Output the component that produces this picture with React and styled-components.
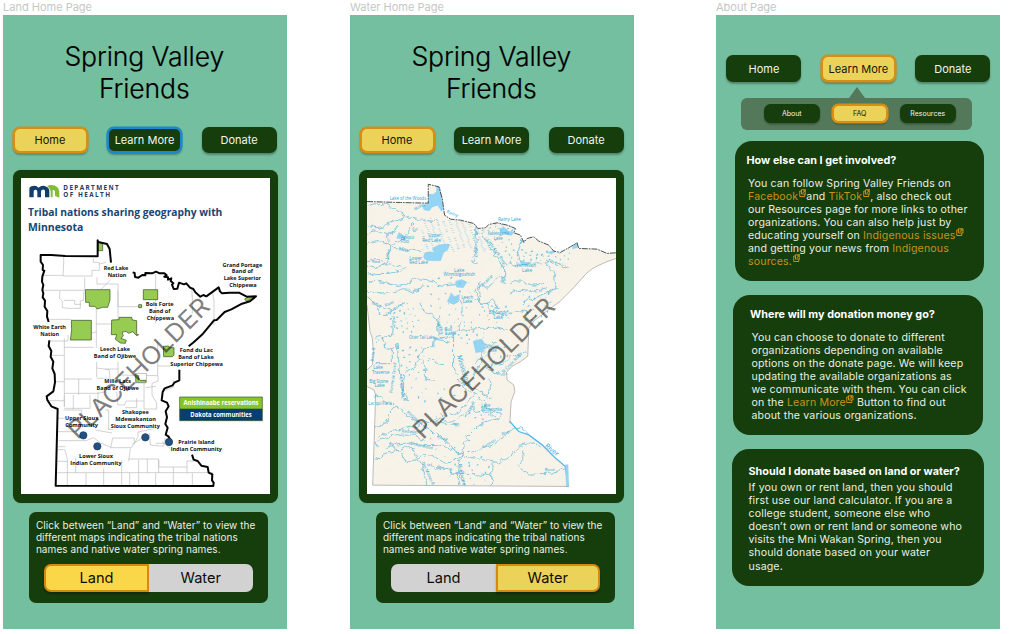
import React from "react";
import styled, { createGlobalStyle } from "styled-components";

const Global = createGlobalStyle`
  * { box-sizing: border-box; }
  body { margin: 0; background: #fff; font-family: Inter, "Liberation Sans", sans-serif; overflow: hidden; }
`;

const Board = styled.main`
  display: flex;
  align-items: flex-start;
  width: 1012px;
  height: 634px;
  padding-left: 3px;
`;
const Artboard = styled.section`
  width: 283.5px;
  margin-right: ${(p) => p.$after || 0}px;
`;
const BoardName = styled.div`
  height: 15px;
  line-height: 14px;
  font-size: 11px;
  color: #c6c6c6;
  white-space: nowrap;
`;
const Phone = styled.div`
  height: 613.5px;
  background: #74bf9f;
  padding-top: ${(p) => p.$top}px;
`;
const Title = styled.h1`
  margin: 0 0 22.5px;
  text-align: center;
  font-size: 26.6px;
  line-height: 32px;
  font-weight: 300;
  letter-spacing: -0.12px;
  -webkit-text-stroke: 0.2px #000;
  color: #000;
  padding-right: 1px;
`;
const Nav = styled.nav`
  display: flex;
  gap: 19.5px;
  padding-left: ${(p) => p.$left || 9.5}px;
`;
const NavButton = styled.button`
  width: 75px;
  height: 26.5px;
  padding: ${(p) => p.$drop || 0}px 0 0;
  border: ${(p) => (p.$tone ? "2px solid" : "0 solid")};
  border-color: ${(p) => (p.$tone === "focus" ? "#1c86ce" : "#d68e14")};
  border-radius: 7px;
  background: ${(p) => (p.$tone === "active" ? "#ebd35a" : "#163d0c")};
  color: ${(p) => (p.$tone === "active" ? "#14140a" : "#f2f5f1")};
  box-shadow: ${(p) => (p.$tone ? `0 0 0 0.6px ${p.$tone === "focus" ? "#1c86ce" : "#d68e14"}, ` : "")}0 1.5px 2px rgba(0, 0, 0, 0.3);
  font: 400 11px Inter, sans-serif;
  white-space: nowrap;
`;
const SubButton = styled(NavButton)`
  width: 56.5px;
  height: 18.5px;
  border-radius: 6.5px;
  font-size: 7px;
`;
const MapCard = styled.div`
  width: 265px;
  height: 333px;
  margin: 16.5px 0 0 ${(p) => p.$left}px;
  padding: 8px;
  border-radius: 8px;
  background: #163d0c;
  box-shadow: 0 0 1px rgba(22, 61, 12, 0.5);
  svg { display: block; width: 249px; height: 316px; margin-top: 0.5px; background: #fff; }
`;
const InfoCard = styled.div`
  width: 238.5px;
  height: 91px;
  margin: 9px 0 0 26.4px;
  padding: 7px 0 0 6.5px;
  border-radius: 7px;
  background: #163d0c;
`;
const InfoText = styled.p`
  margin: 0;
  font-size: 10px;
  line-height: 12.4px;
  letter-spacing: 0.07px;
  color: #e9efe7;
  white-space: pre;
`;
const Toggle = styled.div`
  display: flex;
  width: 208.5px;
  height: 28px;
  margin: 7.8px 0 0 8.5px;
`;
const ToggleHalf = styled.button`
  width: 50%;
  padding: 1px 0 0;
  border: ${(p) => (p.$on ? "2px solid #d4890f" : "0")};
  border-radius: ${(p) => (p.$side === "left" ? "7px 0 0 7px" : "0 7px 7px 0")};
  background: ${(p) => p.$on || "#d2d2d2"};
  box-shadow: ${(p) => (p.$on ? "0 2px 2px rgba(0,0,0,.3)" : "none")};
  font: 400 14.6px Inter, sans-serif;
  color: #0c0c08;
`;
const Pointer = styled.div`
  width: 0;
  margin: 5px 0 0 132.5px;
  border: 8px solid transparent;
  border-top: 0;
  border-bottom: 11px solid #54795a;
`;
const SubNav = styled.div`
  display: flex;
  align-items: flex-start;
  gap: 11.5px;
  width: 231px;
  height: 32px;
  margin-left: 25px;
  padding: 6.5px 0 0 22.5px;
  border-radius: 6px;
  background: #54795a;
`;
const FaqCard = styled.article`
  width: ${(p) => p.$w}px;
  height: ${(p) => p.$h}px;
  margin: ${(p) => p.$gap}px 0 0 ${(p) => p.$left}px;
  padding: ${(p) => p.$pad};
  border-radius: 17px;
  background: #163d0c;
`;
const Question = styled.h2`
  margin: 0;
  font-size: 10.8px;
  line-height: 13px;
  font-weight: 700;
  letter-spacing: 0.03px;
  color: #fff;
  white-space: nowrap;
`;
const Answer = styled.p`
  margin: ${(p) => p.$gap}px 0 0 ${(p) => p.$in || 0}px;
  font-size: 10.6px;
  line-height: 13.1px;
  letter-spacing: 0.14px;
  color: #e9efe7;
  white-space: pre;
`;
const Link = styled.span`
  color: #c6921b;
`;
const LinkIcon = styled.svg`
  display: inline-block;
  width: 7.5px;
  height: 8px;
  margin-left: 0.5px;
  vertical-align: 3px;
  margin-top: -5px;
`;
const Out = () => (
  <LinkIcon viewBox="0 0 15 16" fill="none" stroke="#d69a17" strokeWidth="1.8">
    <path d="M5 4H1.5V15H11.5V10.5M5 1.5H14V10H5ZM7.5 8L12 3.5M8.5 3.5H12V7" />
  </LinkIcon>
);

const MapText = styled.text`
  font-family: "Open Sans", "Noto Sans", sans-serif;
  font-weight: ${(p) => p.$weight || 700};
`;

function Watermark() {
  return (
    <g transform="translate(199 824) rotate(-44.6)">
      <text x="-3" y="0" fill="#000" fillOpacity=".5" fontFamily="Inter" fontSize="74" textLength="564" lengthAdjust="spacingAndGlyphs">PLACEHOLDER</text>
    </g>
  );
}

const places = [
  [312, 316, 74, "Red Lake"], [315, 337, 56, "Nation"],
  [691, 305, 119, "Grand Portage"], [691, 325, 64, "Band of"], [691, 346, 112, "Lake Superior"], [693, 366, 82, "Chippewa"],
  [443, 423, 84, "Bois Forte"], [443, 443, 64, "Band of"], [445, 464, 82, "Chippewa"],
  [113, 493, 98, "White Earth"], [113, 514, 56, "Nation"],
  [309, 558, 90, "Leech Lake"], [309, 579, 127, "Band of Ojibwe"],
  [553, 562, 99, "Fond du Lac"], [552, 582, 107, "Band of Lake"], [554, 603, 158, "Superior Chippewa"],
  [317, 653, 80, "Mille Lacs"], [317, 674, 127, "Band of Ojibwe"],
  [209, 765, 100, "Upper Sioux"], [209, 786, 98, "Community"],
  [370, 748, 80, "Shakopee"], [371, 769, 122, "Mdewakanton"], [370, 790, 147, "Sioux Community"],
  [252, 878, 102, "Lower Sioux"], [252, 899, 154, "Indian Community"],
  [553, 838, 108, "Prairie Island"], [553, 858, 154, "Indian Community"],
];

const counties =
  "M155 276V297L153 333H240M93 331H153M240 333V316H262V292H244V280M262 297L282 292M218 337V375M92 376H218M255 337V357H318V508M295 345L266 374M318 425H380M431 327V374M318 377V425M540 372V395M602 383L606 410V480M541 390V445M431 404V475M144 378L142 400L151 408V428L170 430H205V408L215 405V380M155 406H188V418H207M108 463H178M253 432V548M253 477H300M236 505L254 500M157 520V725M119 571H157M110 528H168V510M157 547H245M254 590V636M254 609L291 614L295 640H254M318 590V630L368 631M320 612H280M200 642V690M157 642H240M127 650H157M157 685H260L280 680M157 690V725M104 707H157M234 690V730H157M258 680V735M280 735H290V795M155 735H209V756M314 680L318 720H337L343 708H395M396 655V732H434V714L420 690V655L438 648V632L401 631M437 530V630M437 603H475M484 645V667L450 680M401 668L432 664M374 700V728H340M138 800H190M140 827H222L245 818L267 835L299 848H358L367 836V819H302L299 834L296 850M367 835L378 815V801L430 790M412 804L415 840L455 844L459 820M430 835H475M355 850L350 889M136 854H158L166 880V962M133 889H166M136 923H604M191 878V924M222 924V963M275 910V963M329 885V963M350 882H440V924M380 885V964M406 882V924M440 885V906H525V888H560M484 906V965M525 906V925M541 925V964M353 924V964M431 924V964M138 845L160 845M450 830L475 851M250 795L300 804M184 690V733M136 760H175M290 793H303M402 803L390 820L360 838";

function LandMap() {
  return (
    <svg viewBox="27 39 747 948">
      <path d="M52 97V72Q52 64 63 63Q74 61 79 68Q91 59 103 65Q112 68 112 79V97H99V79Q99 72 91 74Q87 75 87 80V97H76V80Q76 73 69 74Q65 75 65 80V97Z" fill="#123e69" />
      <path d="M116 97V78Q113 68 105 63Q119 57 132 64Q141 69 142 82V98L129 93V80Q127 72 122 76V97Z" fill="#83bd35" />
      <MapText x="154" y="74" fontSize="19" textLength="166" fill="#143e69">DEPARTMENT</MapText>
      <MapText x="154" y="96" fontSize="19" textLength="140" fill="#143e69">OF HEALTH</MapText>
      <MapText x="48" y="152" fontSize="32" textLength="583" lengthAdjust="spacingAndGlyphs" fill="#174575">Tribal nations sharing geography with</MapText>
      <MapText x="48" y="197" fontSize="32" textLength="166" lengthAdjust="spacingAndGlyphs" fill="#174575">Minnesota</MapText>
      <path d={counties} fill="none" stroke="#bbb" strokeWidth="2" />
      <g fill="#96cc51" stroke="#35451f" strokeWidth="2">
        <path d="M220 374H294V405L287 427H272L255 432L249 424H232V412H221Z" />
        <path d="M394 374H437V404H394ZM380 419H389V428H380ZM178 466H238V525H175L179 495Z" />
        <path d="M299 465L321 464V457H359L361 465L374 467V509H380L374 512L362 500L350 505L342 499L330 502L334 512L327 520L343 526L340 535L325 534L310 523L314 509H298Z" />
        <path d="M454 544L470 543L473 548H486V571L481 575H455ZM370 628L380 632V642L386 646H402V653H371ZM698 402L710 395L730 396L703 409ZM259 232L272 235V257H259Z" />
        <rect x="370" y="625" width="33" height="28" fill="none" stroke="#aaa" />
      </g>
      <path d="M297 293L293 252L285 237L259 231L257 226V274L160 273L118 270H86V290L93 300L92 315L97 317L91 335L90 350L94 360L91 375L94 385L92 397L99 407L98 425L106 438L105 455L110 471M112 526L110 543L118 558L116 575L124 590L121 610L128 627L129 652L124 679L104 694L106 705L118 724L137 732L131 962L604 963L605 953L600 946L601 928L590 923L587 906L568 902L557 888L545 884L540 869M362 322L368 324L369 336L379 338L391 330L400 331L400 324L420 325L432 320L443 325H457L464 331L457 335L468 337L468 344L478 340L476 348L484 355L480 359L485 372L496 371L501 353L516 358L523 355L534 368L544 372L550 382L565 395L574 390L583 394L620 367L624 379L630 385L654 383H681L704 395L732 394L714 409L690 416L658 433L638 441L614 465L606 466L573 506L559 519L545 532L530 544M502 614V646L487 653L482 661L458 670L452 681L449 706L465 713L470 724L461 739L465 757L460 777L467 788L461 809L470 815L478 829" fill="none" stroke="#050505" strokeWidth="6" strokeLinejoin="round" />
      <g fill="#215083" stroke="#163751" strokeWidth="2">
        <circle cx="214" cy="811" r="11" /><circle cx="256" cy="844" r="11" /><circle cx="400" cy="817" r="11" /><circle cx="471" cy="831" r="11" />
      </g>
      <path d="M503 696H751V732H503Z" fill="#88c52b" />
      <path d="M503 732H751V767H503Z" fill="#073f70" />
      <path d="M503 696H751V767H503ZM503 732H751" fill="none" stroke="#36532e" strokeWidth="2" />
      <MapText x="627" y="720" fontSize="20" textAnchor="middle" textLength="225" lengthAdjust="spacingAndGlyphs" fill="#fff">Anishinaabe reservations</MapText>
      <MapText x="627" y="756" fontSize="20" textAnchor="middle" textLength="184" lengthAdjust="spacingAndGlyphs" fill="#fff">Dakota communities</MapText>
      {places.map(([x, y, w, t]) => (
        <MapText key={t + y + x} x={x} y={y} fontSize="17.5" textAnchor="middle" textLength={w} lengthAdjust="spacingAndGlyphs" fill="#111" stroke="#fff" strokeWidth="3" paintOrder="stroke">{t}</MapText>
      ))}
      <Watermark />
    </svg>
  );
}

const waterShape =
  "M29 109L130 112L213 114V57L245 65L255 100L262 150L280 162L310 165L350 175L362 190L385 188L395 178L420 173L450 180L475 190L470 203L490 210L500 232L510 220L530 215L545 228L575 240L590 258L610 262L640 245L660 233L665 250L720 252L750 265L777 263V280Q712 301 687 326L646 372L610 408L568 439L530 468L515 490L512 574L490 590L465 604L448 622L450 645L470 660L473 680L462 710L458 775L485 800L515 810L555 840L590 875L625 905L635 965L46 961L55 690L50 675L29 665V615L45 600L48 560L45 520L38 500L29 420Z";

const rivers =
  "M30 122Q70 108 97 123T138 149T205 166T242 170M31 180Q57 195 88 180T155 150M30 209Q48 193 77 205T122 180M30 240Q55 217 91 233T150 202T174 199M30 288Q51 278 72 291T96 270T93 216T119 202M97 239Q120 259 153 254T198 267M31 302Q50 315 71 301T127 309M30 330Q58 323 86 325T148 305M31 352Q62 344 92 356T155 350T228 351T304 354M29 378Q73 394 109 381T160 381T198 359M31 398Q63 431 92 437T132 408M59 431Q78 461 100 441T144 410M101 440Q114 458 109 487T89 512L58 530M185 412Q187 432 205 440T233 459T242 500T289 510Q306 488 312 469M304 402Q322 430 311 450M359 188L356 240Q361 262 348 277T361 292M375 194Q377 223 400 250T436 296T437 355M434 314L455 292Q486 309 482 298M490 240V222M505 230Q482 235 481 260T505 292M510 295L552 293L597 286M568 294Q594 322 595 350T569 385M445 340Q419 325 407 350T379 362T365 389T397 410T410 440Q432 459 459 446T513 440M373 355L352 376L364 405L389 417L402 432M460 356Q483 340 508 354T565 350M456 390Q482 371 502 377T569 370M497 420Q520 399 545 393T598 365M570 285L606 304M589 288L633 310M309 494Q358 500 389 488T451 496M289 506V620Q315 650 324 665T355 690T382 716T428 768M55 690Q83 706 110 724T156 754T217 793T274 838T312 872M49 521Q75 500 77 526L84 550L105 548V596H48M105 548L120 538L124 590L129 650L135 700M148 708Q132 669 143 628L175 600L202 548L229 545L231 520Q262 522 281 529M184 585Q209 592 202 619T230 645M211 577Q239 600 260 599M327 654Q344 665 361 671L401 701M356 690Q332 700 322 722T281 750M349 718Q342 738 360 745L397 737L429 745V765M387 604L440 594L459 574L508 563M389 604Q403 628 449 624M390 638Q412 650 392 684V706M377 571L362 611L344 638M419 532L381 553L355 594M55 790Q85 776 92 753T125 728M62 817Q89 799 113 797T199 776M197 789L219 768L303 780M199 823Q155 798 101 813T60 850M83 850Q124 830 159 837T228 842T315 870M99 834Q108 866 139 849T180 885Q214 852 239 880T315 872M133 862Q138 895 163 891T186 887Q206 929 211 961M197 890Q249 919 309 924T401 929M243 907L300 925L309 965M315 871L322 833Q334 811 360 789T428 765M339 866Q366 848 389 846T451 805T515 813M316 873Q368 882 403 891T478 855T550 850M497 854V884L480 905L513 928L581 925L628 911M405 888L403 963M314 870L302 907L325 963M69 786L89 768M55 884L80 867L134 853M241 745L263 760L240 764L233 758M262 768H293L317 752";

const waterNames = [
  [152, 103, 110, "Lake of the Woods"], [457, 169, 69, "Rainy Lake"], [423, 211, 63, "Kabetogama"], [423, 225, 27, "Lake"],
  [232, 217, 38, "Upper"], [223, 232, 56, "Red Lake"], [151, 222, 40, "Agassiz"], [143, 234, 25, "Pool"],
  [175, 284, 38, "Lower"], [184, 298, 56, "Red Lake"], [507, 306, 60, "Vermilion"], [510, 321, 30, "Lake"],
  [306, 320, 31, "Lake"], [306, 333, 95, "Winnibigoshish"], [330, 401, 35, "Leech"], [331, 415, 29, "Lake"],
  [422, 447, 54, "Big Sandy"], [423, 462, 28, "Lake"], [273, 497, 24, "Gull"], [280, 509, 33, "Lake"], [194, 521, 77, "Otter Tail Lake"],
  [62, 612, 29, "Lake"], [70, 626, 52, "Traverse"], [64, 653, 57, "Big Stone"], [67, 667, 31, "Lake"], [68, 721, 70, "Lac qui Parle"],
  [386, 725, 27, "Lake"], [403, 738, 62, "Minnetonka"], [406, 548, 40, "Mille Lacs"], [406, 562, 25, "Lake"],
];
const riverNames = [
  [173, 136, -28, 35, "Muskeg"], [267, 143, 21, 36, "Rainy"], [388, 226, 54, 92, "Little Fork River"], [44, 294, 0, 24, "Red"], [123, 255, 13, 31, "River"],
  [43, 416, 28, 28, "Buffalo"], [85, 426, -25, 30, "River"], [378, 364, -45, 42, "Prairie"], [237, 462, 73, 48, "Crow Wing"],
  [299, 573, 73, 95, "Mississippi"], [438, 626, -45, 83, "St Croix River"], [148, 743, 42, 51, "Minnesota"], [238, 818, 23, 33, "River"],
  [133, 803, 3, 56, "Redwood"], [160, 839, 13, 67, "Cottonwood"], [378, 851, -30, 45, "Cannon"], [435, 813, -22, 30, "River"], [331, 751, -59, 44, "Crow R"],
  [193, 894, 65, 74, "Des Moines R"], [304, 898, 80, 66, "Blue Earth R"], [562, 845, 39, 47, "River"], [563, 918, 0, 30, "Root"],
  [105, 684, -82, 92, "Pomme de Terre R"], [127, 637, 82, 72, "Chippewa R"], [93, 283, -80, 31, "Lake"], [350, 248, 82, 30, "Bigfork"], [48, 590, -82, 42, "Bois R"],
];

const clusters = [
  [140, 460, 48, 48, 26], [285, 390, 85, 75, 26], [505, 280, 60, 27, 24], [430, 190, 40, 17, 14],
  [430, 245, 50, 25, 12], [300, 488, 53, 30, 18], [535, 420, 48, 60, 24], [170, 590, 45, 57, 20],
  [415, 445, 55, 28, 15], [280, 870, 95, 70, 13], [210, 687, 85, 26, 10], [360, 745, 45, 20, 10],
  [600, 268, 50, 24, 15], [350, 520, 40, 25, 11], [360, 925, 50, 37, 10], [420, 560, 42, 42, 12],
];
const lakelets = clusters.flatMap(([cx, cy, rx, ry, n], c) =>
  Array.from({ length: n }, (_, i) => {
    const a = i * 2.4 + c;
    const r = Math.sqrt((i + 0.5) / n);
    return [cx + Math.cos(a) * r * rx, cy + Math.sin(a) * r * ry, 1.3 + ((i * 7) % 5) * 0.35, (i * 41) % 180];
  })
);
const marsh = Array.from({ length: 190 }, (_, i) => [190 + ((i * 53) % 205), 145 + ((i * 37 + (i % 5) * 9) % 115)])
  .filter(([x, y]) => y > 158 + Math.max(0, x - 260) * 0.23);

function WaterMap() {
  return (
    <svg viewBox="29 39 748 948">
      <defs>
        <filter id="relief" x="0" y="0" width="100%" height="100%">
          <feTurbulence type="fractalNoise" baseFrequency=".025" numOctaves="4" seed="7" />
          <feDiffuseLighting surfaceScale="2.2" lightingColor="#fff"><feDistantLight azimuth="225" elevation="65" /></feDiffuseLighting>
          <feComposite in2="SourceGraphic" operator="in" />
        </filter>
        <filter id="meander" x="0" y="0" width="100%" height="100%" colorInterpolationFilters="sRGB">
          <feTurbulence type="fractalNoise" baseFrequency=".05" numOctaves="2" seed="3" />
          <feDisplacementMap in="SourceGraphic" scale="22" xChannelSelector="R" yChannelSelector="G" />
        </filter>
      </defs>
      <path d={waterShape} fill="#f8f3e8" />
      <path d={waterShape} fill="#fff" filter="url(#relief)" opacity=".08" />
      <g stroke="#8acbe0" strokeWidth="1.5">
        {marsh.map(([x, y], i) => <path key={i} d={`M${x} ${y}h6`} />)}
      </g>
      <path d={rivers} fill="none" stroke="#72bfdc" strokeWidth="2.6" filter="url(#meander)" />
      <path d="M458 770L485 800L515 810L555 840L590 875L625 905L633 963" fill="none" stroke="#58b9e7" strokeWidth="4" />
      <g fill="#94d5f6" stroke="#76c3e9" strokeWidth="1">
        <path d="M215 87L228 88L238 80L238 62L248 66L258 132L253 138L241 120L224 126L216 137L200 134L196 122L213 117Z" />
        <path d="M225 252Q241 236 276 237Q278 252 259 262L250 287L210 286Q192 278 204 263Q218 258 232 262Z" />
        <path d="M295 349L312 343L329 351L318 368L298 366ZM275 400L282 383L291 395L307 388L303 411L289 418L270 409ZM348 529L373 522L384 538L379 559L356 563ZM118 219L125 202L139 212L130 221ZM426 190L442 188L454 198L471 202L462 211L435 203ZM625 900H633L635 966H628Z" />
        <path d="M488 290L501 285L502 293L521 291L510 301L494 299ZM650 238L662 234L660 248L646 251ZM568 262L589 258L585 267Z" />
      </g>
      <g fill="#72c6ea">
        {lakelets.map(([x, y, r, a], i) => <ellipse key={i} cx={x} cy={y} rx={r * 1.5} ry={r * 0.8} transform={`rotate(${a} ${x} ${y})`} />)}
      </g>
      <path d="M777 280Q712 301 687 326L646 372L610 408L568 439L530 468L515 490L512 574L490 590L465 604L448 622L450 645L470 660L473 680L462 710L458 775M29 420L38 500L45 520L48 560L45 600L29 615M29 665L50 675L55 690L46 961L635 965" fill="none" stroke="#9c9c99" strokeWidth="2" />
      <path d="M29 109L130 112L213 114V57L245 65L255 100L262 150L280 162L310 165L350 175L362 190L385 188L395 178L420 173L450 180L475 190L470 203L490 210L500 232L510 220L530 215L545 228L575 240L590 258L610 262L640 245L660 233L665 250L720 252L750 265L777 263" fill="none" stroke="#4c5054" strokeWidth="3" strokeDasharray="18 3 5 3" />
      <g fill="#2ba2d4">
        {waterNames.map(([x, y, w, t], i) => <MapText key={i} $weight="500" x={x} y={y} fontSize="13.5" textAnchor="middle" textLength={w} lengthAdjust="spacingAndGlyphs">{t}</MapText>)}
        {riverNames.map(([x, y, a, w, t], i) => <MapText key={i} $weight="500" x={x} y={y} fontSize={t === "Mississippi" || (t === "River" && x === 562) ? 20 : 13} textLength={w} lengthAdjust="spacingAndGlyphs" transform={`rotate(${a} ${x} ${y})`}>{t}</MapText>)}
      </g>
      <Watermark />
    </svg>
  );
}

function HomePage({ name, view, after, focus }) {
  const land = view === "land";
  return (
    <Artboard $after={after}>
      <BoardName>{name}</BoardName>
      <Phone $top={25}>
        <Title>Spring Valley<br />Friends</Title>
        <Nav>
          <NavButton $tone="active">Home</NavButton>
          <NavButton $tone={focus ? "focus" : undefined}>Learn More</NavButton>
          <NavButton>Donate</NavButton>
        </Nav>
        <MapCard $left={land ? 9.6 : 9.4}>{land ? <LandMap /> : <WaterMap />}</MapCard>
        <InfoCard>
          <InfoText>{"Click between “Land” and “Water” to view the\ndifferent maps indicating the tribal nations\nnames and native water spring names."}</InfoText>
          <Toggle>
            <ToggleHalf $side="left" $on={land ? "#fad748" : undefined}>Land</ToggleHalf>
            <ToggleHalf $side="right" $on={land ? undefined : "#ebd35a"}>Water</ToggleHalf>
          </Toggle>
        </InfoCard>
      </Phone>
    </Artboard>
  );
}

function AboutPage() {
  return (
    <Artboard>
      <BoardName>About Page</BoardName>
      <Phone $top={40}>
        <Nav $left={10.4}>
          <NavButton $drop={1.5}>Home</NavButton>
          <NavButton $tone="active" $drop={1.5}>Learn More</NavButton>
          <NavButton $drop={1.5}>Donate</NavButton>
        </Nav>
        <Pointer />
        <SubNav>
          <SubButton>About</SubButton>
          <SubButton $tone="active">FAQ</SubButton>
          <SubButton>Resources</SubButton>
        </SubNav>
        <FaqCard $w={249.5} $h={140} $gap={11.5} $left={18.5} $pad="13px 0 0 12px">
          <Question>How else can I get involved?</Question>
          <Answer $gap={9.5} $in={1.5}>
            {"You can follow Spring Valley Friends on\n"}<Link>Facebook<Out /></Link>{"and "}<Link>TikTok<Out /></Link>{", also check out\nour Resources page for more links to other\norganizations. You can also help just by\neducating yourself on "}<Link>Indigenous issues<Out /></Link>{"\nand getting your news from "}<Link>{"Indigenous\nsources."}<Out /></Link>
          </Answer>
        </FaqCard>
        <FaqCard $w={250} $h={140} $gap={14} $left={17} $pad="13px 0 0 17px">
          <Question>Where will my donation money go?</Question>
          <Answer $gap={9.5} $in={1.5}>
            {"You can choose to donate to different\norganizations depending on available\noptions on the donate page. We will keep\nupdating the available organizations as\nwe communicate with them. You can click\non the "}<Link>Learn More<Out /></Link>{" Button to find out\nabout the various organizations."}
          </Answer>
        </FaqCard>
        <FaqCard $w={252} $h={137} $gap={14} $left={16} $pad="15.5px 0 0 16.5px">
          <Question>Should I donate based on land or water?</Question>
          <Answer $gap={3.5}>
            {"If you own or rent land, then you should\nfirst use our land calculator. If you are a\ncollege student, someone else who\ndoesn’t own or rent land or someone who\nvisits the Mni Wakan Spring, then you\nshould donate based on your water\nusage."}
          </Answer>
        </FaqCard>
      </Phone>
    </Artboard>
  );
}

export default function App() {
  return (
    <>
      <Global />
      <Board>
        <HomePage name="Land Home Page" view="land" after={63.5} focus />
        <HomePage name="Water Home Page" view="water" after={82.5} />
        <AboutPage />
      </Board>
    </>
  );
}
